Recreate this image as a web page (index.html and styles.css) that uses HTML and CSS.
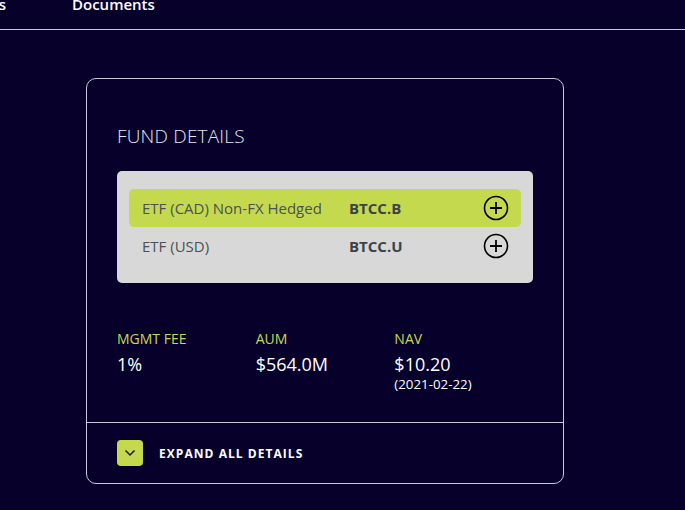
FILE: index.html
```html
<!DOCTYPE html>
<html>
<head>
<meta charset="utf-8">
<link rel="stylesheet" href="styles.css">
</head>
<body>
<header class="topbar">
  <nav class="nav">
    <span class="nav-first"><a class="nav-link">Products</a></span>
    <a class="nav-link">Documents</a>
  </nav>
</header>
<main class="main">
  <section class="card">
    <div class="card-body">
      <h2 class="card-title">FUND DETAILS</h2>
      <div class="class-box">
        <div class="class-row active">
          <span class="class-name">ETF (CAD) Non-FX Hedged</span>
          <span class="class-ticker">BTCC.B</span>
          <svg class="plus" viewBox="0 0 26 26" width="26" height="26"><circle cx="13" cy="13" r="11.5" fill="none" stroke="#000" stroke-width="1.6"/><path d="M13 7v12M7 13h12" stroke="#000" stroke-width="1.8" fill="none"/></svg>
        </div>
        <div class="class-row">
          <span class="class-name">ETF (USD)</span>
          <span class="class-ticker">BTCC.U</span>
          <svg class="plus" viewBox="0 0 26 26" width="26" height="26"><circle cx="13" cy="13" r="11.5" fill="none" stroke="#000" stroke-width="1.6"/><path d="M13 7v12M7 13h12" stroke="#000" stroke-width="1.8" fill="none"/></svg>
        </div>
      </div>
      <div class="stats">
        <div class="stat">
          <div class="stat-label">MGMT FEE</div>
          <div class="stat-value">1%</div>
        </div>
        <div class="stat">
          <div class="stat-label">AUM</div>
          <div class="stat-value">$564.0M</div>
        </div>
        <div class="stat">
          <div class="stat-label">NAV</div>
          <div class="stat-value">$10.20</div>
          <div class="stat-date">(2021-02-22)</div>
        </div>
      </div>
    </div>
    <div class="card-footer">
      <span class="expand-btn"><svg viewBox="0 0 12 8" width="12" height="8"><path d="M1.5 1.5l4.5 4.5 4.5-4.5" fill="none" stroke="#1a1a2e" stroke-width="1.5"/></svg></span>
      <span class="expand-text">EXPAND ALL DETAILS</span>
    </div>
  </section>
</main>
</body>
</html>
```

FILE: styles.css
```css
* { box-sizing: border-box; }
html, body {
  margin: 0;
  padding: 0;
  background: #06002b;
  font-family: "Open Sans", "Noto Sans", sans-serif;
  color: #ffffff;
}
.topbar {
  height: 30px;
  border-bottom: 1px solid #c9c8dc;
  overflow: hidden;
}
.nav {
  display: flex;
  margin-top: -6px;
}
.nav-first {
  width: 6px;
  margin-right: 66px;
  display: flex;
  justify-content: flex-end;
  white-space: nowrap;
}
.nav-link {
  font-size: 15px;
  font-weight: 600;
  line-height: 20px;
  color: #fff;
  white-space: nowrap;
}
.main {
  padding: 48px 0 0 86px;
}
.card {
  width: 478px;
  height: 406px;
  border: 1px solid #c9c8dc;
  border-radius: 10px;
  display: flex;
  flex-direction: column;
}
.card-body {
  flex: 1;
  padding: 45px 30px 0 30px;
  border-bottom: 1px solid #c9c8dc;
}
.card-title {
  margin: 0;
  font-size: 19px;
  line-height: 24px;
  font-weight: 300;
  color: #e6e6f2;
  letter-spacing: 0.2px;
}
.class-box {
  margin-top: 23px;
  width: 416px;
  height: 112px;
  background: #d8d8d8;
  border-radius: 5px;
  padding: 18px 12px;
}
.class-row {
  display: flex;
  align-items: center;
  height: 38px;
  padding: 0 12px 0 13px;
  border-radius: 5px;
  color: #4a5252;
  font-size: 15px;
}
.class-row.active {
  background: #c5d94f;
}
.class-name {
  width: 207px;
}
.class-ticker {
  flex: 1;
  font-weight: 700;
  color: #3b4444;
}
.plus {
  display: block;
}
.stats {
  display: flex;
  margin-top: 46px;
}
.stat {
  width: 139px;
}
.stat-label {
  font-size: 14px;
  line-height: 20px;
  color: #c5d94f;
}
.stat-value {
  margin-top: 4px;
  font-size: 18px;
  line-height: 22px;
  color: #fff;
}
.stat-date {
  font-size: 13.3px;
  line-height: 18px;
  color: #fff;
}
.card-footer {
  height: 60px;
  display: flex;
  align-items: center;
  padding-left: 30px;
}
.expand-btn {
  width: 26px;
  height: 26px;
  background: #c5d94f;
  border-radius: 4px;
  display: flex;
  align-items: center;
  justify-content: center;
}
.expand-text {
  margin-left: 16px;
  font-size: 12px;
  font-weight: 700;
  letter-spacing: 1.05px;
  color: #fff;
}
```
